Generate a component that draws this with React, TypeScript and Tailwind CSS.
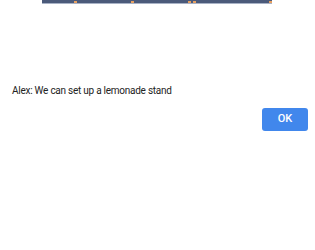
import React from 'react';

const App: React.FC = () => {
  return (
    <div className="relative w-[315px] h-[250px] bg-white overflow-hidden" style={{ fontFamily: 'Roboto, "Liberation Sans", sans-serif' }}>
      {/* Top strip of a cropped header */}
      <div className="ml-[42px] w-[230px] h-[3px] bg-[#4b5a7a] flex items-end">
        <span className="ml-[32px] w-[3px] h-[2px] bg-[#e8a060]" />
        <span className="ml-[54px] w-[3px] h-[2px] bg-[#e8a060]" />
        <span className="ml-[54px] w-[3px] h-[2px] bg-[#e8a060]" />
        <span className="ml-[2px] w-[3px] h-[2px] bg-[#e8a060]" />
        <span className="ml-[73px] w-[3px] h-[2px] bg-[#e8a060]" />
      </div>
      <div className="ml-[42px] w-[230px] h-px bg-[#a8b2c6]" />

      {/* Dialog body */}
      <div className="pt-[81px] pl-[12px] pr-[7px]">
        <p className="text-[10px] leading-[12px] tracking-[-0.25px] text-[#222]">Alex: We can set up a lemonade stand</p>
        <div className="flex justify-end mt-[11px]">
          <button className="w-[46px] h-[23px] rounded-[3px] bg-[#4187ec] text-white text-[11px] font-medium">
            OK
          </button>
        </div>
      </div>
    </div>
  );
};

export default App;
